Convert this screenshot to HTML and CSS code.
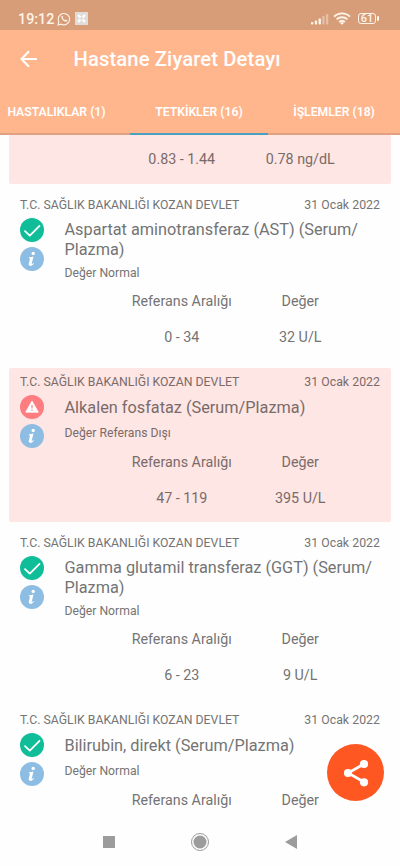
FILE: index.html
```html
<!DOCTYPE html>
<html lang="tr">
<head>
<meta charset="utf-8">
<title>Hastane Ziyaret Detayı</title>
<link rel="stylesheet" href="styles.css">
</head>
<body>
<svg class="defs" width="0" height="0" aria-hidden="true">
  <symbol id="ok" viewBox="0 0 24 24"><circle cx="12" cy="12" r="12" fill="#10bd99"/><path d="M5 13.2l4.8 4.4L19.5 7.8" fill="none" stroke="#fff" stroke-width="1.8" stroke-linecap="round" stroke-linejoin="round"/></symbol>
  <symbol id="warn" viewBox="0 0 24 24"><circle cx="12" cy="12" r="12" fill="#fd7d80"/><path d="M12 6l6.3 11.2H5.7z" fill="#fff" stroke="#fff" stroke-width=".8" stroke-linejoin="round"/><path d="M12 10v3.6M12 14.7v1.3" stroke="#fd7d80" stroke-width="1.2"/></symbol>
  <symbol id="info" viewBox="0 0 24 24"><circle cx="12" cy="12" r="12"/><circle cx="13.2" cy="6.4" r="1.7" fill="#fff"/><path d="M9 10.3c1.500-.2 2.900-.5 4.500-.9l-1.800 7.300c-.1.600.4.600 1.800-.7l.5.500c-1.300 1.700-2.500 2.500-3.800 2.400-1.300-.1-1.700-1-1.400-2.300l1.100-4.500c.1-.7-.1-.9-1.100-.9z" fill="#fff"/></symbol>
</svg>
<div class="screen">
  <div class="status">
    <span class="clock">19:12</span>
    <svg class="whatsapp" viewBox="0 0 14 14"><path d="M1 13l.9-3.100A5.700 5.700 0 1 1 4.200 12.200z" fill="none" stroke="#fff4e8" stroke-width="1.1"/><path d="M4.600 4.100c.5-.6 1-.4 1.200.1l.4 1c0 .3-.3.500-.5.800.6 1.100 1.300 1.700 2.400 2.200l.7-.8 1.500.7c.2.900-.6 1.700-1.600 1.700C6.600 9.700 3.800 6.500 4.600 4.100z" fill="#fff4e8"/></svg>
    <svg class="appicon" viewBox="0 0 13 13"><path d="M0 0h13v13H0z" fill="#dfdcda"/><path d="M3 3l2.500 2.500M10 3L7.500 5.500M3 10l2.500-2.500M10 10L7.500 7.500" stroke="#fff" stroke-width="2.200"/></svg>
    <span class="spacer"></span>
    <svg class="signal" viewBox="0 0 18 12"><g fill="#fff4e8"><rect x="0" y="9" width="2.300" height="2.500" rx=".7"/><rect x="3.800" y="7.500" width="2.300" height="4" rx=".7"/><rect x="7.600" y="5.500" width="2.300" height="6" rx=".7"/><g opacity=".4"><rect x="11.300" y="3" width="2.300" height="8.500" rx=".7"/><rect x="15" y="1" width="2.300" height="10.500" rx=".7"/></g></g></svg>
    <svg class="wifi" viewBox="0 0 18 13"><g fill="none" stroke="#fff4e8" stroke-width="1.900"><path d="M1 4.600a11.500 11.500 0 0 1 16 0M3.600 7.400a7.800 7.800 0 0 1 10.800 0M6.100 10a4.300 4.300 0 0 1 5.800 0"/></g><path d="M9 9.800l2 1.100-2 1.800-2-1.800z" fill="#fff4e8"/></svg>
    <div class="battery"><span>61</span></div>
  </div>
  <header class="appbar">
    <svg class="back" viewBox="0 0 18 18"><path d="M17 9H2M9 1.200L1.500 9 9 16.800" fill="none" stroke="#fff" stroke-width="2"/></svg>
    <h1>Hastane Ziyaret Detayı</h1>
  </header>
  <nav class="tabs">
    <a class="tab first">HASTALIKLAR (1)</a>
    <a class="tab active">TETKİKLER (16)</a>
    <a class="tab last">İŞLEMLER (18)</a>
  </nav>
  <main class="list">
    <article class="card alert partial">
      <div class="grid"><span>0.83 - 1.44</span><span>0.78 ng/dL</span></div>
    </article>
    <article class="card">
      <div class="head"><span>T.C. SAĞLIK BAKANLIĞI KOZAN DEVLET</span><span class="date">31 Ocak 2022</span></div>
      <div class="body">
        <div class="icons"><svg><use href="#ok"/></svg><svg class="info"><use href="#info"/></svg></div>
        <div class="text"><h2>Aspartat aminotransferaz (AST) (Serum/<br>Plazma)</h2><p>Değer Normal</p></div>
      </div>
      <div class="grid"><span>Referans Aralığı</span><span>Değer</span><span>0 - 34</span><span>32 U/L</span></div>
    </article>
    <article class="card alert single">
      <div class="head"><span>T.C. SAĞLIK BAKANLIĞI KOZAN DEVLET</span><span class="date">31 Ocak 2022</span></div>
      <div class="body">
        <div class="icons"><svg><use href="#warn"/></svg><svg class="info"><use href="#info"/></svg></div>
        <div class="text"><h2>Alkalen fosfataz (Serum/Plazma)</h2><p>Değer Referans Dışı</p></div>
      </div>
      <div class="grid"><span>Referans Aralığı</span><span>Değer</span><span>47 - 119</span><span>395 U/L</span></div>
    </article>
    <article class="card">
      <div class="head"><span>T.C. SAĞLIK BAKANLIĞI KOZAN DEVLET</span><span class="date">31 Ocak 2022</span></div>
      <div class="body">
        <div class="icons"><svg><use href="#ok"/></svg><svg class="info"><use href="#info"/></svg></div>
        <div class="text"><h2>Gamma glutamil transferaz (GGT) (Serum/<br>Plazma)</h2><p>Değer Normal</p></div>
      </div>
      <div class="grid"><span>Referans Aralığı</span><span>Değer</span><span>6 - 23</span><span>9 U/L</span></div>
    </article>
    <article class="card single">
      <div class="head"><span>T.C. SAĞLIK BAKANLIĞI KOZAN DEVLET</span><span class="date">31 Ocak 2022</span></div>
      <div class="body">
        <div class="icons"><svg><use href="#ok"/></svg><svg class="info"><use href="#info"/></svg></div>
        <div class="text"><h2>Bilirubin, direkt (Serum/Plazma)</h2><p>Değer Normal</p></div>
      </div>
      <div class="grid"><span>Referans Aralığı</span><span>Değer</span></div>
    </article>
  </main>
  <footer class="navbar">
    <svg viewBox="0 0 20 20"><path d="M4 4h12v12H4z"/></svg>
    <svg viewBox="0 0 20 20"><circle cx="10" cy="10" r="6.500"/><circle cx="10" cy="10" r="8.500" fill="none" stroke="#9c9c9c"/></svg>
    <svg viewBox="0 0 20 20"><path d="M16 3v14L4 10z"/></svg>
  </footer>
  <button class="fab" aria-label="Paylaş"><svg viewBox="0 0 28 28"><path d="M22 5L6 14l16 9" fill="none" stroke="#fff" stroke-width="2.600"/><g fill="#fff"><circle cx="22" cy="5" r="4.100"/><circle cx="6" cy="14" r="4.100"/><circle cx="22" cy="23.300" r="4.100"/></g></svg></button>
</div>
</body>
</html>
```
FILE: styles.css
```css
* { box-sizing: border-box; }
body { margin: 0; font-family: Roboto, sans-serif; color: #747474; background: #fefefe; }
h1, h2, p { margin: 0; font-weight: 400; }
.defs { position: absolute; }
.screen { position: relative; width: 400px; height: 866px; overflow: hidden; display: flex; flex-direction: column; }

.status { flex: none; height: 30px; background: #d79c78; display: flex; align-items: center; padding: 7px 21px 0 18px; color: #fff4e8; }
.clock { font-size: 14.3px; font-weight: 500; width: 38.5px; padding-top: 1px; white-space: nowrap; }
.whatsapp { width: 14px; height: 14px; }
.appicon { width: 13px; height: 13px; margin-left: 4.5px; }
.spacer { flex: 1; }
.signal { width: 18px; height: 12px; margin-right: 4px; }
.wifi { width: 18px; height: 13px; margin-right: 7px; }
.battery { position: relative; width: 18px; height: 11px; border: 1px solid #fff4e8; border-radius: 3px; font-size: 11px; font-weight: 500; line-height: 9px; text-align: center; margin-right: 3px; }
.battery::after { content: ""; position: absolute; right: -4px; top: 2px; width: 2px; height: 5px; border-radius: 1px; background: #fff4e8; }

.appbar { flex: none; height: 58px; background: #ffb68d; display: flex; align-items: center; padding-left: 20px; color: #fff; }
.back { width: 18px; height: 18px; margin-right: 35.5px; }
h1 { font-size: 20.2px; font-weight: 500; letter-spacing: .13px; }

.tabs { flex: none; height: 47px; background: #ffb68d; display: grid; grid-template-columns: 130px 138px 132px; border-bottom: 2px solid #dfa17f; color: #fff; }
.tab { display: flex; align-items: center; justify-content: center; height: 47px; font-size: 12.2px; font-weight: 600; white-space: nowrap; }
.first { padding-right: 17px; }
.active { border-bottom: 2px solid #4c9fbe; padding-top: 2px; }

.list { flex: 1; min-height: 0; overflow: hidden; display: flex; flex-direction: column; gap: 7px; padding: 0 9px; }
.card { flex: none; height: 170px; border-radius: 2px; padding: 6px 11px 0; }
.single { height: 154px; }
.alert { background: #fee6e4; color: #7a6b6a; }
.partial { height: 49px; border-radius: 0 0 2px 2px; padding-top: 7px; }
.head { display: flex; justify-content: space-between; height: 16px; line-height: 16px; font-size: 12.28px; white-space: nowrap; }
.date { letter-spacing: .05px; }
.body { display: flex; height: 77px; }
.single .body { height: 61px; }
.icons { flex: none; width: 44.5px; padding-top: 5px; display: flex; flex-direction: column; gap: 5px; }
.icons svg { width: 24px; height: 24px; fill: #8dbde2; }
.text { padding-top: 7px; }
h2 { font-size: 16.3px; line-height: 19.5px; white-space: nowrap; }
.single h2 { padding-top: 1px; }
.text p { font-size: 12.2px; line-height: 16px; margin-top: 6px; }
.single .text p { margin-top: 7px; }
.grid { display: grid; grid-template-columns: 118.5px 118.5px; row-gap: 17.500px; padding-left: 102.5px; padding-top: 2px; font-size: 14.3px; line-height: 18px; text-align: center; white-space: nowrap; }
.partial .grid { padding-top: 8px; }

.navbar { flex: none; height: 50px; display: flex; justify-content: center; align-items: center; gap: 71px; padding-top: 2px; background: #fefefe; }
.navbar svg { width: 20px; height: 20px; fill: #9c9c9c; }
.fab { position: absolute; right: 16px; top: 744px; width: 57px; height: 57px; border: 0; border-radius: 50%; background: #ff5722; display: grid; place-items: center; padding: 0; }
.fab svg { width: 28px; height: 28px; }
```
